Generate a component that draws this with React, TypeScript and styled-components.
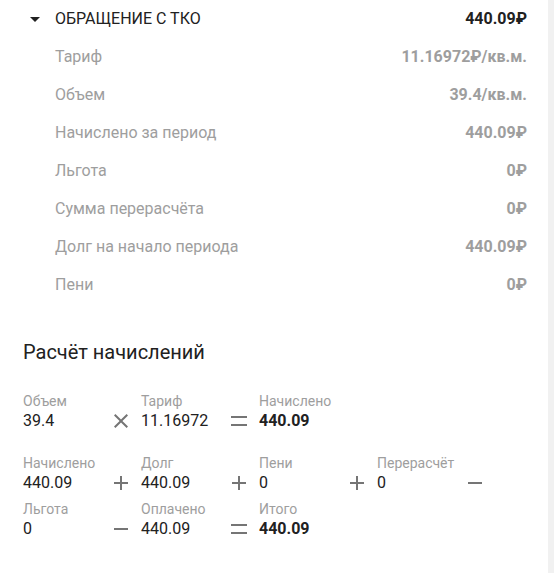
import React from "react";
import styled, { createGlobalStyle } from "styled-components";

const Global = createGlobalStyle`
  html, body { margin: 0; padding: 0; background: #fff; }
  body { font-family: Roboto, "Noto Sans", "Liberation Sans", sans-serif; }
  * { box-sizing: border-box; }
`;

const Page = styled.div`
  display: flex;
  width: 554px;
  min-height: 573px;
`;

const Content = styled.div`
  width: 548px;
  background: #fff;
`;

const Strip = styled.div`
  width: 6px;
  background: #f1f1f1;
`;

const HeaderRow = styled.div`
  display: flex;
  align-items: center;
  height: 37px;
  padding: 0 21px 0 23px;
  color: #212121;
  font-size: 16px;
`;

const Caret = styled.svg`
  width: 24px;
  height: 24px;
  fill: #212121;
  margin-right: 8px;
  flex: none;
`;

const HeaderTitle = styled.span`
  flex: 1;
  text-transform: uppercase;
`;

const HeaderValue = styled.span`
  font-weight: 700;
`;

const DetailRow = styled.div`
  display: flex;
  align-items: center;
  justify-content: space-between;
  height: 38px;
  padding: 0 21px 0 55px;
  font-size: 16px;
  color: #9e9e9e;
`;

const DetailValue = styled.span`
  font-weight: 700;
`;

const CalcSection = styled.div`
  padding: 37px 0 0 23px;
`;

const CalcTitle = styled.h2`
  margin: 0;
  font-size: 20px;
  font-weight: 400;
  line-height: 24px;
  color: #212121;
`;

const FormulaRow = styled.div<{ $gap: number }>`
  display: flex;
  margin-top: ${(p) => p.$gap}px;
`;

const Item = styled.div`
  width: 78px;
  display: flex;
  flex-direction: column;
`;

const ItemLabel = styled.span`
  font-size: 14px;
  line-height: 17px;
  color: #9e9e9e;
  white-space: nowrap;
`;

const ItemValue = styled.span<{ $bold?: boolean }>`
  font-size: 16px;
  line-height: 22px;
  color: #212121;
  font-weight: ${(p) => (p.$bold ? 700 : 400)};
  white-space: nowrap;
`;

const Op = styled.div`
  width: 40px;
  height: 20px;
  margin-bottom: 1px;
  align-self: flex-end;
  display: flex;
  align-items: center;
  justify-content: center;
  svg {
    width: 24px;
    height: 24px;
    fill: #757575;
  }
`;

type OpKind = "times" | "plus" | "minus" | "equals";

const paths: Record<OpKind, string> = {
  times:
    "M19 6.41 17.59 5 12 10.59 6.41 5 5 6.41 10.59 12 5 17.59 6.41 19 12 13.41 17.59 19 19 17.59 13.41 12z",
  plus: "M19 13h-6v6h-2v-6H5v-2h6V5h2v6h6v2z",
  minus: "M19 13H5v-2h14v2z",
  equals: "M4 7h16v2H4zM4 15h16v2H4z",
};

const Operator = ({ kind }: { kind: OpKind }) => (
  <Op>
    <svg viewBox="0 0 24 24">
      <path d={paths[kind]} />
    </svg>
  </Op>
);

const Cell = ({ label, value, bold }: { label: string; value: string; bold?: boolean }) => (
  <Item>
    <ItemLabel>{label}</ItemLabel>
    <ItemValue $bold={bold}>{value}</ItemValue>
  </Item>
);

const details = [
  ["Тариф", "11.16972₽/кв.м."],
  ["Объем", "39.4/кв.м."],
  ["Начислено за период", "440.09₽"],
  ["Льгота", "0₽"],
  ["Сумма перерасчёта", "0₽"],
  ["Долг на начало периода", "440.09₽"],
  ["Пени", "0₽"],
];

export default function App() {
  return (
    <>
      <Global />
      <Page>
        <Content>
          <HeaderRow>
            <Caret viewBox="0 0 24 24">
              <path d="M7 10l5 5 5-5z" />
            </Caret>
            <HeaderTitle>Обращение с ТКО</HeaderTitle>
            <HeaderValue>440.09₽</HeaderValue>
          </HeaderRow>
          {details.map(([l, v]) => (
            <DetailRow key={l}>
              <span>{l}</span>
              <DetailValue>{v}</DetailValue>
            </DetailRow>
          ))}
          <CalcSection>
            <CalcTitle>Расчёт начислений</CalcTitle>
            <FormulaRow $gap={29}>
              <Cell label="Объем" value="39.4" />
              <Operator kind="times" />
              <Cell label="Тариф" value="11.16972" />
              <Operator kind="equals" />
              <Cell label="Начислено" value="440.09" bold />
            </FormulaRow>
            <FormulaRow $gap={23}>
              <Cell label="Начислено" value="440.09" />
              <Operator kind="plus" />
              <Cell label="Долг" value="440.09" />
              <Operator kind="plus" />
              <Cell label="Пени" value="0" />
              <Operator kind="plus" />
              <Cell label="Перерасчёт" value="0" />
              <Operator kind="minus" />
            </FormulaRow>
            <FormulaRow $gap={7}>
              <Cell label="Льгота" value="0" />
              <Operator kind="minus" />
              <Cell label="Оплачено" value="440.09" />
              <Operator kind="equals" />
              <Cell label="Итого" value="440.09" bold />
            </FormulaRow>
          </CalcSection>
        </Content>
        <Strip />
      </Page>
    </>
  );
}
